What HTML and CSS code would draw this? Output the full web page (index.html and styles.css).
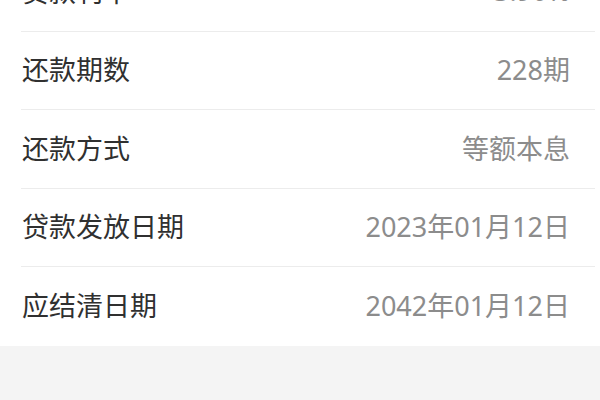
FILE: index.html
```html
<!DOCTYPE html>
<html lang="zh-CN">
<head>
<meta charset="utf-8">
<link rel="stylesheet" href="styles.css">
</head>
<body>
<div class="page">
  <ul class="list">
    <li class="row"><span class="label">贷款利率</span><span class="value">3.90%</span></li>
    <li class="row"><span class="label">还款期数</span><span class="value">228期</span></li>
    <li class="row"><span class="label">还款方式</span><span class="value">等额本息</span></li>
    <li class="row"><span class="label">贷款发放日期</span><span class="value">2023年01月12日</span></li>
    <li class="row"><span class="label">应结清日期</span><span class="value">2042年01月12日</span></li>
  </ul>
</div>
</body>
</html>
```
FILE: styles.css
```css
html, body {
  margin: 0;
  padding: 0;
  height: 100%;
  background: #f4f4f4;
  overflow: hidden;
}
.page {
  font-family: "Noto Sans", "Noto Sans CJK SC", sans-serif;
}
.list {
  list-style: none;
  margin: -47px 0 0 0;
  padding: 0;
  background: #fff;
}
.row {
  display: flex;
  align-items: center;
  justify-content: space-between;
  height: 78.5px;
  box-sizing: border-box;
  margin-left: 21px;
  margin-right: 5px;
  padding-right: 25px;
  padding-bottom: 3px;
  border-bottom: 1px solid #ececec;
}
.row:last-child {
  border-bottom: none;
}
.label {
  font-size: 27px;
  color: #303030;
  margin-left: 1px;
}
.value {
  font-size: 27px;
  color: #8c8c8c;
}
```
